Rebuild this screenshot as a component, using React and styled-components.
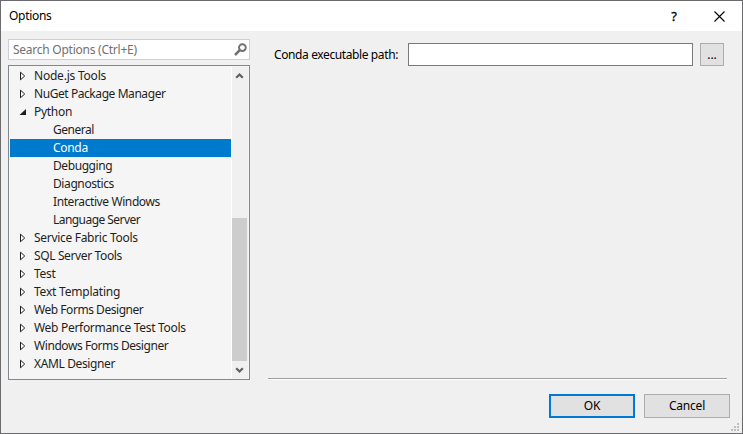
import React from "react";
import styled, { createGlobalStyle } from "styled-components";

const GlobalStyle = createGlobalStyle`
  * { box-sizing: border-box; }
  body { margin: 0; overflow: hidden; }
  button, input { font: inherit; color: inherit; margin: 0; padding: 0; outline: none; border-radius: 0; }
`;

const Window = styled.div`
  width: 743px;
  height: 434px;
  display: flex;
  flex-direction: column;
  background: #f0f0f0;
  border: 1px solid #6b6a6c;
  font: 12px/18px "Noto Sans", "Open Sans", sans-serif;
  color: #1e1e1e;
`;

const TitleBar = styled.header`
  height: 30px;
  flex: none;
  display: flex;
  align-items: center;
  justify-content: space-between;
  padding: 0 17px 0 8px;
  background: #fff;
  color: #000;
`;

const TitleActions = styled.div`
  display: flex;
  align-items: center;
  gap: 37px;
`;

const HelpMark = styled.span`
  font-size: 13px;
  -webkit-text-stroke: 0.3px #000;
`;

const Label = styled.span`
  display: block;
  white-space: pre;
  letter-spacing: ${(p) => p.$track || 0}px;
`;

const Body = styled.main`
  height: 349px;
  display: flex;
  gap: 18px;
  padding: 8px 15px 0 7px;
`;

const Sidebar = styled.aside`
  width: 242px;
  display: flex;
  flex-direction: column;
  gap: 5px;
`;

const SearchBox = styled.div`
  height: 21px;
  display: flex;
  align-items: center;
  justify-content: space-between;
  padding: 0 2px 0 4px;
  border: 1px solid #cccedb;
  background: #fff;
  color: #717171;
`;

const TreeFrame = styled.div`
  height: 315px;
  display: flex;
  padding: 1px;
  border: 1px solid #828790;
  background: #f5f5f5;
`;

const Tree = styled.ul`
  width: 221px;
  margin: 0;
  padding: 0;
  list-style: none;
`;

const TreeRow = styled.li`
  height: 18px;
  display: flex;
  align-items: center;
  padding-left: ${(p) => (p.$child ? 43 : 9)}px;
  background: ${(p) => (p.$selected ? "#007acc" : "transparent")};
  color: ${(p) => (p.$selected ? "#fff" : "#1e1e1e")};
`;

const Expander = styled.svg`
  width: 8px;
  height: 10px;
  margin-right: 7px;
  flex: none;
`;

const ScrollBar = styled.div`
  width: 17px;
  display: flex;
  flex-direction: column;
  align-items: center;
  justify-content: space-between;
  padding-right: 1px;
  border-left: 1px solid #fff;
  background: #f0f0f0;
  background-clip: padding-box;
`;

const Thumb = styled.div`
  width: 15px;
  height: 143px;
  margin-top: auto;
  background: #cdcdcd;
`;

const ScrollArrow = styled.svg`
  width: 15px;
  height: 17px;
`;

const Page = styled.section`
  flex: 1;
  display: flex;
  flex-direction: column;
  justify-content: space-between;
  border-bottom: 1px solid #fff;
  color: #000;
`;

const Field = styled.label`
  display: flex;
  align-items: center;
  padding: 4px 3px 0 6px;
`;

const FieldName = styled.span`
  width: 134px;
`;

const PathInput = styled.input`
  width: 285px;
  height: 23px;
  margin-right: 7px;
  border: 1px solid #7a7a7a;
  background: #fff;
`;

const Button = styled.button`
  width: ${(p) => p.$width || 86}px;
  height: ${(p) => p.$height || 24}px;
  display: flex;
  align-items: center;
  justify-content: center;
  border: ${(p) => (p.$primary ? "2px solid #0078d7" : "1px solid #adadad")};
  background: #e1e1e1;
`;

const Rule = styled.div`
  height: 1px;
  background: #a0a0a0;
`;

const Footer = styled.footer`
  flex: 1;
  display: flex;
  justify-content: flex-end;
  padding: 14px 3px 0 0;
  color: #000;
`;

const DialogButtons = styled.div`
  display: flex;
  gap: 9px;
`;

const Grip = styled.svg`
  width: 8px;
  height: 8px;
  align-self: flex-end;
  margin: 0 0 2px 1px;
`;

const items = [
  { text: "Node.js Tools", track: -0.22 },
  { text: "NuGet Package Manager", track: -0.43 },
  { text: "Python", track: -0.3, open: true },
  { text: "General", track: -0.5, child: true },
  { text: "Conda", track: -0.3, child: true, selected: true },
  { text: "Debugging", track: -0.42, child: true },
  { text: "Diagnostics", track: -0.4, child: true },
  { text: "Interactive Windows", track: -0.4, child: true },
  { text: "Language Server", track: -0.55, child: true },
  { text: "Service Fabric Tools", track: -0.3 },
  { text: "SQL Server Tools", track: -0.37 },
  { text: "Test", track: -0.3 },
  { text: "Text Templating", track: -0.22 },
  { text: "Web Forms Designer", track: -0.46 },
  { text: "Web Performance Test Tools", track: -0.3 },
  { text: "Windows Forms Designer", track: -0.43 },
  { text: "XAML Designer", track: -0.37 },
];

function TreeItem({ text, track, open, child, selected }) {
  return (
    <TreeRow $child={child} $selected={selected}>
      {!child && (
        <Expander viewBox="0 0 8 10">
          {open ? (
            <path d="M7 2v6H.5z" fill="#1e1e1e" />
          ) : (
            <path d="M1.5 1.2v7.6L5.7 5z" fill="#fff" stroke="#1e1e1e" />
          )}
        </Expander>
      )}
      <Label $track={track}>{text}</Label>
    </TreeRow>
  );
}

export default function App() {
  return (
    <>
      <GlobalStyle />
      <Window>
        <TitleBar>
          <Label $track={-0.3}>Options</Label>
          <TitleActions>
            <HelpMark>?</HelpMark>
            <svg width="11" height="11" viewBox="0 0 11 11">
              <path d="M.5.5l10 10M10.5.5l-10 10" stroke="#000" strokeWidth="1.1" />
            </svg>
          </TitleActions>
        </TitleBar>
        <Body>
          <Sidebar>
            <SearchBox>
              <Label $track={-0.25}>Search Options (Ctrl+E)</Label>
              <svg width="13" height="13" viewBox="0 0 13 13" fill="none" stroke="#717171">
                <circle cx="8.4" cy="4.6" r="3.4" strokeWidth="1.9" />
                <path d="M5.8 7.2L1 12" strokeWidth="2.5" />
              </svg>
            </SearchBox>
            <TreeFrame>
              <Tree>
                {items.map((item) => (
                  <TreeItem key={item.text} {...item} />
                ))}
              </Tree>
              <ScrollBar>
                <ScrollArrow viewBox="0 0 15 17">
                  <path d="M4.2 10.8L7.5 7.5l3.3 3.3" fill="none" stroke="#606060" strokeWidth="2.2" />
                </ScrollArrow>
                <Thumb />
                <ScrollArrow viewBox="0 0 15 17">
                  <path d="M4.2 7.2l3.3 3.3 3.3-3.3" fill="none" stroke="#606060" strokeWidth="2.2" />
                </ScrollArrow>
              </ScrollBar>
            </TreeFrame>
          </Sidebar>
          <Page>
            <Field>
              <FieldName>
                <Label $track={-0.39}>Conda executable path:</Label>
              </FieldName>
              <PathInput />
              <Button $width={24} $height={23}>
                <Label>...</Label>
              </Button>
            </Field>
            <Rule />
          </Page>
        </Body>
        <Footer>
          <DialogButtons>
            <Button $primary>
              <Label $track={-0.2}>OK</Label>
            </Button>
            <Button>
              <Label $track={-0.2}>Cancel</Label>
            </Button>
          </DialogButtons>
          <Grip viewBox="0 0 8 8" fill="#bfbfbf">
            <path d="M6 0h2v2H6zM3 3h2v2H3zM6 3h2v2H6zM0 6h2v2H0zM3 6h2v2H3zM6 6h2v2H6z" />
          </Grip>
        </Footer>
      </Window>
    </>
  );
}
